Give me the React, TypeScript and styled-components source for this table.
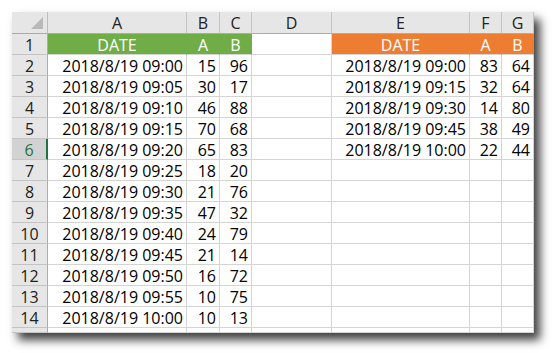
import { FC } from 'react';
import styled, { createGlobalStyle } from 'styled-components';

const COLUMNS = ['A', 'B', 'C', 'D', 'E', 'F', 'G'];
const WIDTHS = [36, 139, 33, 32, 80, 138, 32, 32];
const ACTIVE_ROW = 6;

type Fill = 'green' | 'orange' | undefined;

const FILLS: Record<string, string> = {
  green: '#70ad47',
  orange: '#ed7d31',
};

const left: [string, number, number][] = [
  ['2018/8/19 09:00', 15, 96],
  ['2018/8/19 09:05', 30, 17],
  ['2018/8/19 09:10', 46, 88],
  ['2018/8/19 09:15', 70, 68],
  ['2018/8/19 09:20', 65, 83],
  ['2018/8/19 09:25', 18, 20],
  ['2018/8/19 09:30', 21, 76],
  ['2018/8/19 09:35', 47, 32],
  ['2018/8/19 09:40', 24, 79],
  ['2018/8/19 09:45', 21, 14],
  ['2018/8/19 09:50', 16, 72],
  ['2018/8/19 09:55', 10, 75],
  ['2018/8/19 10:00', 10, 13],
];

const right: [string, number, number][] = [
  ['2018/8/19 09:00', 83, 64],
  ['2018/8/19 09:15', 32, 64],
  ['2018/8/19 09:30', 14, 80],
  ['2018/8/19 09:45', 38, 49],
  ['2018/8/19 10:00', 22, 44],
];

type CellData = { text?: string | number; align?: 'left' | 'center' | 'right'; fill?: Fill };

const buildRows = (): CellData[][] => {
  const rows: CellData[][] = [];
  rows.push([
    { text: 'DATE', align: 'center', fill: 'green' },
    { text: 'A', align: 'center', fill: 'green' },
    { text: 'B', align: 'center', fill: 'green' },
    {},
    { text: 'DATE', align: 'center', fill: 'orange' },
    { text: 'A', align: 'center', fill: 'orange' },
    { text: 'B', align: 'center', fill: 'orange' },
  ]);
  for (let i = 0; i < 13; i++) {
    const l = left[i];
    const r = right[i];
    rows.push([
      { text: l[0], align: 'right' },
      { text: l[1], align: 'right' },
      { text: l[2], align: 'right' },
      {},
      { text: r?.[0], align: 'right' },
      { text: r?.[1], align: 'right' },
      { text: r?.[2], align: 'right' },
    ]);
  }
  return rows;
};

const App: FC = () => {
  const rows = buildRows();

  return (
    <>
      <GlobalStyle />
      <Page>
        <Sheet>
          <Corner>
            <CornerMark />
          </Corner>
          {COLUMNS.map((col) => (
            <ColHead key={col}>{col}</ColHead>
          ))}

          {rows.map((cells, r) => (
            <Row key={r}>
              <RowHead $active={r + 1 === ACTIVE_ROW}>{r + 1}</RowHead>
              {cells.map((cell, c) => (
                <Cell key={c} $align={cell.align ?? 'right'} $fill={cell.fill}>
                  {cell.text}
                </Cell>
              ))}
            </Row>
          ))}

          {/* sliver of row 15 cut off by the window edge */}
          <Row>
            <RowHead $active={false} />
            {COLUMNS.map((col) => (
              <Cell key={col} $align="right" />
            ))}
          </Row>
        </Sheet>
      </Page>
    </>
  );
};

export default App;

const GlobalStyle = createGlobalStyle`
  html, body {
    margin: 0;
    padding: 0;
    background: #ffffff;
  }
  body {
    font-family: "Open Sans", "Liberation Sans", sans-serif;
  }
`;

const Page = styled.div`
  width: 554px;
  height: 353px;
  padding: 12px 0 0 12px;
  box-sizing: border-box;
`;

const Sheet = styled.div`
  display: grid;
  grid-template-columns: ${WIDTHS.map((w) => `${w}px`).join(' ')};
  grid-template-rows: 22px repeat(14, 21px) 5px;
  width: 522px;
  background: #ffffff;
  box-shadow: 6px 7px 9px rgba(0, 0, 0, 0.75);
  overflow: hidden;
`;

const Row = styled.div`
  display: contents;
`;

const Corner = styled.div`
  position: relative;
  background: #e6e6e6;
  border-right: 1px solid #bdbdbd;
  border-bottom: 1px solid #ababab;
  box-sizing: border-box;
`;

const CornerMark = styled.div`
  position: absolute;
  right: 4px;
  bottom: 4px;
  width: 0;
  height: 0;
  border-left: 12px solid transparent;
  border-bottom: 12px solid #b9b9b9;
`;

const ColHead = styled.div`
  display: flex;
  align-items: center;
  justify-content: center;
  background: #e6e6e6;
  border-right: 1px solid #c4c4c4;
  border-bottom: 1px solid #ababab;
  box-sizing: border-box;
  font-size: 16px;
  color: #222222;
  line-height: 1;
  padding-top: 1px;
`;

const RowHead = styled.div<{ $active: boolean }>`
  display: flex;
  align-items: center;
  justify-content: center;
  background: ${({ $active }) => ($active ? '#d2d2d2' : '#e6e6e6')};
  border-right: ${({ $active }) => ($active ? '2px solid #217346' : '1px solid #ababab')};
  border-bottom: 1px solid #c4c4c4;
  box-sizing: border-box;
  font-size: 16px;
  color: ${({ $active }) => ($active ? '#217346' : '#222222')};
  line-height: 1;
  padding-top: 2px;
`;

const Cell = styled.div<{ $align: 'left' | 'center' | 'right'; $fill?: Fill }>`
  display: flex;
  align-items: center;
  justify-content: ${({ $align }) =>
    $align === 'center' ? 'center' : $align === 'left' ? 'flex-start' : 'flex-end'};
  padding: 2px 3px 0 3px;
  background: ${({ $fill }) => ($fill ? FILLS[$fill] : '#ffffff')};
  border-right: 1px solid ${({ $fill }) => ($fill ? FILLS[$fill] : '#d4d4d4')};
  border-bottom: 1px solid #d4d4d4;
  box-sizing: border-box;
  font-size: 16px;
  line-height: 1;
  color: ${({ $fill }) => ($fill ? '#ffffff' : '#000000')};
  white-space: nowrap;
  overflow: hidden;
`;
